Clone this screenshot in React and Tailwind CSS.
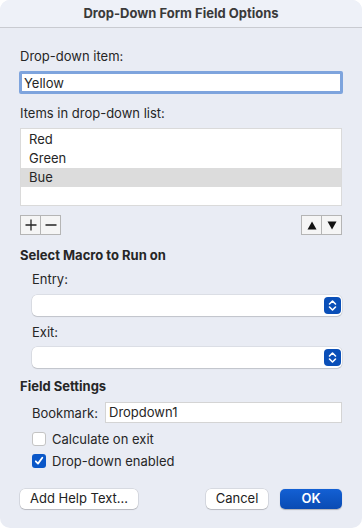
import React from "react";

function Stepper() {
  return (
    <div className="flex h-[17px] w-[17px] items-center justify-center rounded-[4px] bg-[#0a4fb8]">
      <svg width="9" height="13" viewBox="0 0 9 13" fill="none" stroke="white" strokeWidth="1.6" strokeLinecap="round" strokeLinejoin="round">
        <path d="M1.5 5 L4.5 2 L7.5 5" />
        <path d="M1.5 8 L4.5 11 L7.5 8" />
      </svg>
    </div>
  );
}

function Select() {
  return (
    <div className="flex h-[21px] items-center justify-end rounded-[5px] bg-white pr-[1px] shadow-[0_0_0_0.5px_rgba(0,0,0,0.12),0_1px_1px_rgba(0,0,0,0.12)]">
      <Stepper />
    </div>
  );
}

function Btn({ children, className = "" }) {
  return (
    <div className={"flex h-[20px] items-center justify-center rounded-[5px] bg-white text-[#222] shadow-[0_0_0_0.5px_rgba(0,0,0,0.15),0_1px_1px_rgba(0,0,0,0.15)] " + className}>
      {children}
    </div>
  );
}

export default function App() {
  return (
    <div className="h-[528px] w-[362px] bg-white text-[13px] text-[#262626]" style={{ fontFamily: "Inter, 'Noto Sans', sans-serif" }}>
      <div className="flex h-[528px] flex-col overflow-hidden rounded-[10px] bg-[#e9ecf4]">
        <div className="flex h-[28px] items-center justify-center border-b border-[#c9cbd1] bg-[#eef1f8] text-[13px] font-bold text-[#3a3a3a]">
          Drop-Down Form Field Options
        </div>
        <div className="flex flex-col px-[20px]">
          <div className="mt-[20px] leading-[16px]">Drop-down item:</div>
          <div className="mt-[7px] -mx-[1px] flex h-[23px] items-center rounded-[2px] border-[3px] border-[#7ea4dd] bg-white pl-[2px] leading-[16px]">
            Yellow
          </div>
          <div className="mt-[11px] leading-[16px]">Items in drop-down list:</div>
          <div className="mt-[7px] h-[78px] border border-[#dadada] bg-white pt-[1px] leading-[19px]">
            <div className="pl-[8px]">Red</div>
            <div className="pl-[8px]">Green</div>
            <div className="bg-[#dcdcdc] pl-[8px]">Bue</div>
          </div>
          <div className="mt-[9px] flex justify-between">
            <div className="flex h-[20px] border border-[#b5b5b5] bg-[#f5f5f5]">
              <div className="flex w-[20px] items-center justify-center border-r border-[#b5b5b5]">
                <svg width="12" height="12" viewBox="0 0 12 12" stroke="#222" strokeWidth="1.3"><path d="M6 0.5V11.5M0.5 6H11.5" /></svg>
              </div>
              <div className="flex w-[19px] items-center justify-center">
                <svg width="12" height="12" viewBox="0 0 12 12" stroke="#222" strokeWidth="1.3"><path d="M0.5 6H11.5" /></svg>
              </div>
            </div>
            <div className="flex h-[20px] border border-[#b5b5b5] bg-[#f5f5f5]">
              <div className="flex w-[20px] items-center justify-center border-r border-[#b5b5b5]">
                <svg width="10" height="9" viewBox="0 0 10 9" fill="#111"><path d="M5 0.5L9.5 8.5H0.5Z" /></svg>
              </div>
              <div className="flex w-[19px] items-center justify-center">
                <svg width="10" height="9" viewBox="0 0 10 9" fill="#111"><path d="M0.5 0.5H9.5L5 8.5Z" /></svg>
              </div>
            </div>
          </div>
          <div className="mt-[12px] font-bold leading-[16px]">Select Macro to Run on</div>
          <div className="flex flex-col pl-[12px]">
            <div className="mt-[8px] leading-[16px]">Entry:</div>
            <div className="mt-[8px]"><Select /></div>
            <div className="mt-[8px] leading-[16px]">Exit:</div>
            <div className="mt-[7px]"><Select /></div>
          </div>
          <div className="mt-[10px] font-bold leading-[16px]">Field Settings</div>
          <div className="flex flex-col pl-[12px]">
            <div className="mt-[8px] flex items-center">
              <div className="w-[73px] leading-[16px]">Bookmark:</div>
              <div className="flex h-[21px] flex-1 items-center border border-[#d4d4d4] bg-white pl-[3px]">Dropdown1</div>
            </div>
            <div className="mt-[8px] flex items-center leading-[16px]">
              <div className="h-[14px] w-[14px] rounded-[3px] border border-[#c4c4c4] bg-white" />
              <span className="ml-[6px]">Calculate on exit</span>
            </div>
            <div className="mt-[6px] flex items-center leading-[16px]">
              <div className="flex h-[14px] w-[14px] items-center justify-center rounded-[3px] bg-[#0a57c8]">
                <svg width="10" height="10" viewBox="0 0 10 10" fill="none" stroke="white" strokeWidth="1.8" strokeLinecap="round" strokeLinejoin="round"><path d="M1.8 5.3L4 7.6L8.3 1.8" /></svg>
              </div>
              <span className="ml-[6px]">Drop-down enabled</span>
            </div>
          </div>
          <div className="mt-[20px] flex items-center">
            <Btn className="w-[118px]">Add Help Text...</Btn>
            <div className="flex-1" />
            <Btn className="w-[62px]">Cancel</Btn>
            <div className="ml-[12px] flex h-[20px] w-[62px] items-center justify-center rounded-[5px] bg-gradient-to-b from-[#1360d4] to-[#0a4bb3] font-semibold text-white shadow-[0_0.5px_1px_rgba(0,0,0,0.25)]">OK</div>
          </div>
        </div>
      </div>
    </div>
  );
}
